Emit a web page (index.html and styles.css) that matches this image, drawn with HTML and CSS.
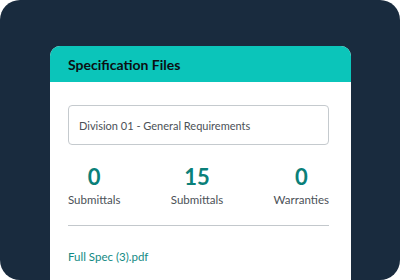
FILE: index.html
```html
<!DOCTYPE html>
<html lang="en">
<head>
    <meta charset="UTF-8">
    <meta name="viewport" content="width=device-width, initial-scale=1.0">
    <title>Specification Files</title>
    <link rel="stylesheet" href="styles.css">
</head>
<body>
    <div class="frame">
        <div class="card">
            <div class="card-header">Specification Files</div>
            <div class="card-body">
                <div class="select">Division 01 - General Requirements</div>
                <div class="stats">
                    <div class="stat">
                        <div class="stat-value">0</div>
                        <div class="stat-label">Submittals</div>
                    </div>
                    <div class="stat">
                        <div class="stat-value">15</div>
                        <div class="stat-label">Submittals</div>
                    </div>
                    <div class="stat">
                        <div class="stat-value">0</div>
                        <div class="stat-label">Warranties</div>
                    </div>
                </div>
                <div class="divider"></div>
                <a class="file-link" href="#">Full Spec (3).pdf</a>
            </div>
        </div>
    </div>
</body>
</html>
```

FILE: styles.css
```css
body {
    margin: 0;
    background-color: #fff;
    font-family: Lato, "Open Sans", sans-serif;
}
.frame {
    width: 400px;
    height: 280px;
    background-color: #192b3e;
    border-radius: 20px;
    overflow: hidden;
    padding: 46px 49px 0 50px;
    box-sizing: border-box;
}
.card {
    background-color: #fff;
    border-radius: 10px 10px 0 0;
    height: 100%;
    overflow: hidden;
}
.card-header {
    background-color: #0bc5ba;
    height: 36px;
    padding: 0 18px;
    display: flex;
    align-items: center;
    font-size: 14px;
    font-weight: 700;
    color: #0c0f12;
}
.card-body {
    padding: 23px 22px 0 18px;
}
.select {
    height: 40px;
    border: 1px solid #c5cace;
    border-radius: 4px;
    box-sizing: border-box;
    display: flex;
    align-items: center;
    padding: 0 10px;
    font-size: 11px;
    color: #4b5157;
}
.stats {
    display: flex;
    justify-content: space-between;
    margin-top: 19px;
}
.stat {
    text-align: center;
}
.stat-value {
    font-size: 22px;
    font-weight: 700;
    color: #0a8079;
    line-height: 26px;
}
.stat-label {
    font-size: 11.5px;
    color: #4b5157;
    margin-top: 3px;
}
.divider {
    height: 1px;
    background-color: #c3c8cc;
    margin-top: 19px;
}
.file-link {
    display: block;
    margin-top: 24px;
    font-size: 11.5px;
    color: #138a84;
    text-decoration: none;
}
```
